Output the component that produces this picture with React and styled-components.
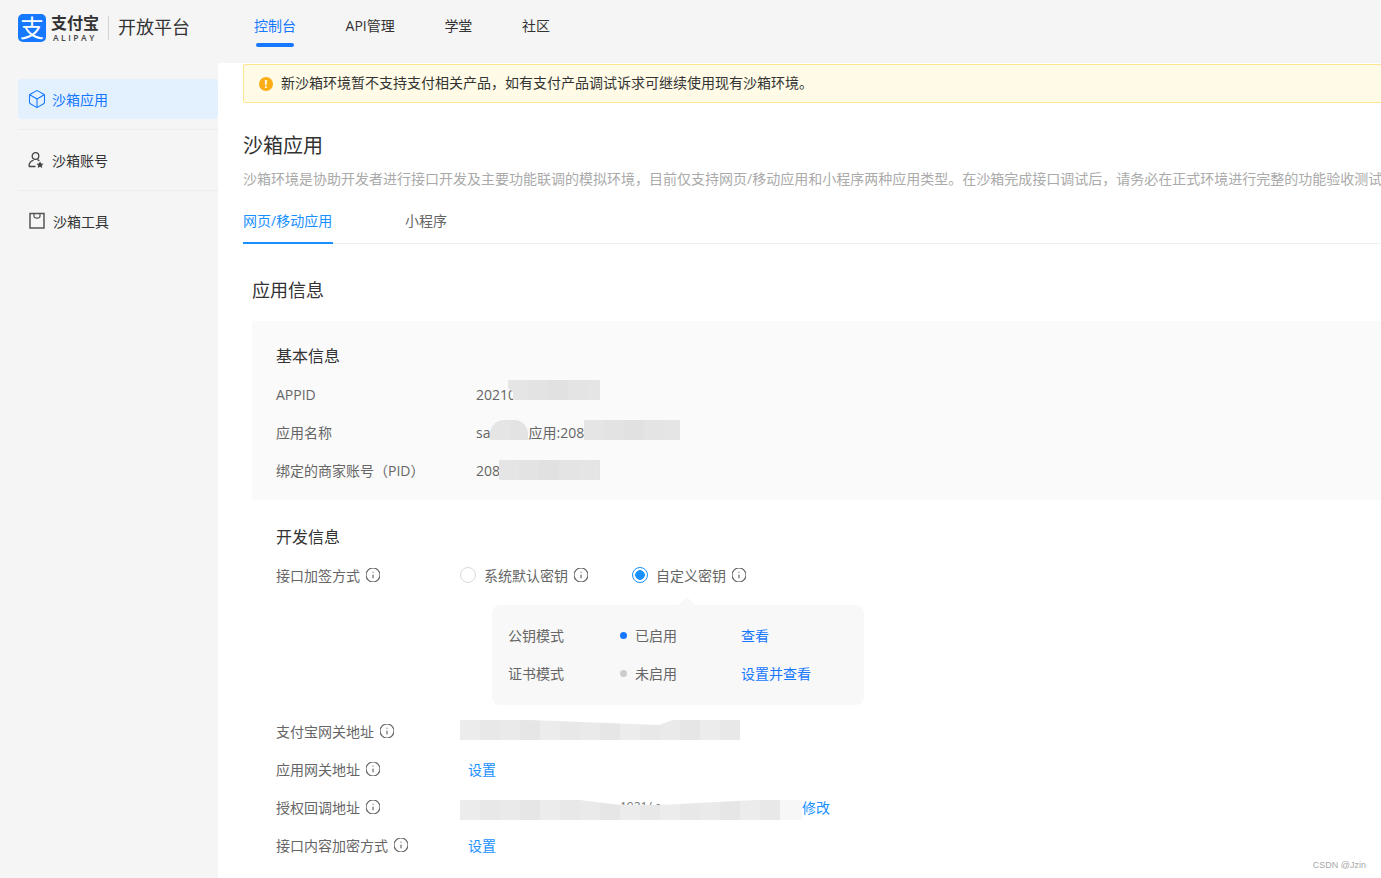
import React from 'react';
import styled, { createGlobalStyle } from 'styled-components';
import { Box, Info } from 'lucide-react';

const GlobalStyle = createGlobalStyle`
  html, body {
    margin: 0;
    padding: 0;
    height: 100%;
    overflow: hidden;
    background: #f5f5f5;
    font-family: "Open Sans", "Noto Sans CJK SC", sans-serif;
    font-size: 14px;
    color: #666;
  }
  * { box-sizing: border-box; }
`;

const Page = styled.div`
  position: relative;
  width: 1381px;
  height: 878px;
  overflow: hidden;
`;

const Header = styled.header`
  display: flex;
  align-items: flex-start;
  height: 63px;
  padding-left: 18px;
`;

const Logo = styled.div`
  display: flex;
  align-items: center;
  width: 236px;
  height: 56px;
`;

const LogoMark = styled.div`
  display: flex;
  align-items: center;
  justify-content: center;
  width: 28px;
  height: 28px;
  border-radius: 5px;
  background: #1677ff;
  color: #fff;
  font-size: 24px;
  line-height: 28px;
`;

const LogoWord = styled.div`
  display: flex;
  flex-direction: column;
  align-items: flex-start;
  width: 48px;
  margin-left: 5px;
`;

const LogoName = styled.span`
  font-size: 16px;
  font-weight: 700;
  line-height: 18px;
  color: #333;
`;

const LogoLatin = styled.span`
  margin: 1px 0 0 2px;
  font-size: 8.500px;
  font-weight: 600;
  line-height: 10px;
  letter-spacing: 2.500px;
  white-space: nowrap;
  color: #444;
`;

const LogoDivider = styled.span`
  width: 1px;
  height: 24px;
  margin: 0 9px;
  background: #d4d4d4;
`;

const LogoTitle = styled.span`
  padding-bottom: 4px;
  font-size: 18px;
  color: #333;
`;

const Nav = styled.nav`
  display: flex;
  gap: 49.6px;
`;

const NavItem = styled.a`
  position: relative;
  display: block;
  height: 47px;
  padding-top: 16px;
  line-height: 20px;
  color: ${p => (p.$active ? '#1677ff' : '#333')};

  ${p =>
    p.$active &&
    `&::after {
      content: '';
      position: absolute;
      left: 2px;
      right: 2px;
      bottom: 0;
      height: 4px;
      border-radius: 2px;
      background: #1677ff;
    }`}
`;

const Body = styled.div`
  display: flex;
  height: 815px;
`;

const Sidebar = styled.aside`
  width: 218px;
  padding: 16px 0 0 18px;
`;

const SideItem = styled.a`
  display: flex;
  align-items: center;
  height: 40px;
  padding-left: ${p => p.$inset || 9}px;
  border-radius: 4px;
  color: ${p => (p.$active ? '#1677ff' : '#333')};
  background: ${p => (p.$active ? '#e3f1fe' : 'transparent')};
`;

const IconSlot = styled.span`
  display: flex;
  align-items: center;
  width: 25px;
`;

const SideDivider = styled.div`
  height: 1px;
  margin: 10px 0;
  background: #ececec;
`;

const Main = styled.main`
  flex: 1;
  min-width: 0;
  padding-left: 25px;
  background: #fff;
  overflow: hidden;
`;

const Notice = styled.div`
  display: flex;
  align-items: center;
  gap: 8px;
  width: 1300px;
  height: 39px;
  margin-top: 1px;
  padding-left: 15px;
  background: #fffbe6;
  border: 1px solid #ffe58f;
  border-radius: 2px;
  color: #333;
`;

const NoticeIcon = styled.span`
  display: flex;
  align-items: center;
  justify-content: center;
  width: 14px;
  height: 14px;
  border-radius: 50%;
  background: #faad14;
  color: #fff;
  font-size: 11px;
  font-weight: 700;
`;

const NoticeText = styled.span`
  padding-bottom: 3px;
`;

const PageTitle = styled.h1`
  margin: 28px 0 0;
  font-size: 20px;
  font-weight: 400;
  line-height: 30px;
  color: #333;
`;

const Description = styled.p`
  margin: 7px 0 0;
  line-height: 22px;
  color: #aaa;
  white-space: nowrap;
`;

const Tabs = styled.div`
  display: flex;
  gap: 72px;
  height: 44px;
  margin-top: 10px;
  border-bottom: 1px solid #eee;
`;

const Tab = styled.a`
  height: 44px;
  min-width: ${p => (p.$active ? 90 : 0)}px;
  padding-top: 11px;
  line-height: 20px;
  color: ${p => (p.$active ? '#1890ff' : '#666')};
  border-bottom: ${p => (p.$active ? '2px solid #1890ff' : 'none')};
`;

const SectionTitle = styled.h2`
  margin: 32px 0 0 9px;
  font-size: 18px;
  font-weight: 400;
  line-height: 28px;
  color: #333;
`;

const Panel = styled.section`
  height: 179px;
  margin: 17px 0 0 9px;
  padding: 23px 0 0 24px;
  background: #fafafa;
`;

const GroupTitle = styled.h3`
  margin: 0 0 8px;
  font-size: 16px;
  font-weight: 400;
  line-height: 24px;
  color: #333;
`;

const Row = styled.div`
  display: grid;
  grid-template-columns: ${p => p.$label || 200}px 1fr;
  align-items: center;
  height: 38px;
  padding-bottom: 2px;
`;

const Label = styled.span`
  display: flex;
  align-items: center;
  gap: 6px;
  color: #666;
`;

const Value = styled.div`
  display: flex;
  align-items: center;
  color: #666;
`;

const tiles = {
  dark: 'repeating-linear-gradient(90deg, #e5e5e5 0 20px, #e3e3e3 20px 40px, #e1e1e1 40px 60px, #e4e4e4 60px 80px)',
  soft: 'repeating-linear-gradient(90deg, #ececec 0 20px, #e8e8e8 20px 40px, #eaeaea 40px 60px, #e6e6e6 60px 80px)',
  pale: '#f7f7f7',
};

// $shift, $overlap: the redaction boxes in the picture are not aligned with their rows
const Mask = styled.span`
  display: block;
  flex: none;
  width: ${p => p.$w}px;
  height: ${p => p.$h || 20}px;
  margin-left: ${p => -(p.$overlap || 0)}px;
  background: ${p => tiles[p.$tone || 'dark']};
  transform: translateY(${p => p.$shift || 0}px);
  ${p => p.$round && 'border-radius: 14px 14px 0 0;'}
  ${p => p.$clip && `clip-path: ${p.$clip};`}
`;

const MaskGap = styled.span`
  display: flex;
  flex: none;
  flex-direction: column;
  width: 40px;
  height: 20px;
  transform: translateY(${p => p.$shift || 0}px);
`;

const GapText = styled.span`
  display: block;
  flex: none;
  height: 5px;
  font-size: 12px;
  line-height: 14px;
  white-space: nowrap;
  overflow: hidden;
  color: #777;
`;

const DevSection = styled.section`
  margin: 25px 0 0 33px;
`;

const RadioGroup = styled.div`
  display: flex;
  align-items: center;
  gap: 44px;
`;

const RadioOption = styled.label`
  display: flex;
  align-items: center;
  gap: 6px;
  color: #666;
`;

const RadioDot = styled.span`
  width: 16px;
  height: 16px;
  margin-right: 2px;
  border-radius: 50%;
  border: 1px solid ${p => (p.$checked ? '#1890ff' : '#d9d9d9')};
  background: ${p => (p.$checked ? 'radial-gradient(circle, #1890ff 0 4.5px, #fff 5px)' : '#fff')};
`;

const Popover = styled.div`
  position: relative;
  width: 372px;
  height: 100px;
  margin: 10px 0 8px 216px;
  padding: 12px 16px;
  border-radius: 8px;
  background: #f8f8f8;

  &::before {
    content: '';
    position: absolute;
    top: -8px;
    left: 186px;
    border-left: 9px solid transparent;
    border-right: 9px solid transparent;
    border-bottom: 9px solid #f8f8f8;
  }
`;

const ModeRow = styled.div`
  display: grid;
  grid-template-columns: 112px 122px 1fr;
  align-items: center;
  height: 38px;
  padding-bottom: 2px;
`;

const Status = styled.span`
  display: flex;
  align-items: center;
  gap: 8px;
  color: #666;

  &::before {
    content: '';
    width: 7px;
    height: 7px;
    border-radius: 50%;
    background: ${p => (p.$on ? '#1677ff' : '#ccc')};
  }
`;

const TextLink = styled.a`
  flex: none;
  color: ${p => p.$color || '#1890ff'};
  margin-left: ${p => p.$offset || 0}px;
`;

const Watermark = styled.span`
  position: absolute;
  right: 15px;
  bottom: 8px;
  font-family: "Liberation Sans", sans-serif;
  font-size: 9px;
  color: #a8a8a8;
`;

const TipIcon = styled(Info)`
  flex: none;
  width: 14px;
  height: 14px;
`;

const Tip = () => (
  <TipIcon viewBox="2 2 20 20" strokeWidth={1.700} color="#666" />
);

const UserStarIcon = () => (
  <svg width="18" height="18" viewBox="0 0 18 18" fill="none" stroke="#444" strokeWidth="1.300">
    <circle cx="8.500" cy="5" r="3.300" />
    <path d="M2 15.500c0-3.400 1.800-5.700 4.600-6.200M10.500 8.600c.8.300 1.300.7 1.800 1.200M2 15.500h6.500" />
    <path d="M13 10.300l1.100 2.200 2.400.3-1.700 1.700.4 2.400-2.200-1.100-2.200 1.100.4-2.400-1.700-1.700 2.400-.3z" fill="#444" stroke="none" />
  </svg>
);

const BagIcon = () => (
  <svg width="18" height="18" viewBox="0 0 18 18" fill="none" stroke="#555" strokeWidth="1.500">
    <path d="M2 1.500h14v14.500H2z" />
    <path d="M6 1.500v2.800c0 2.400 6 2.400 6 0V1.500" strokeWidth="1.200" />
  </svg>
);

const InfoLabel = ({ children }) => (
  <Label>
    {children}
    <Tip />
  </Label>
);

const App = () => (
  <Page>
    <GlobalStyle />
    <Header>
      <Logo>
        <LogoMark>支</LogoMark>
        <LogoWord>
          <LogoName>支付宝</LogoName>
          <LogoLatin>ALIPAY</LogoLatin>
        </LogoWord>
        <LogoDivider />
        <LogoTitle>开放平台</LogoTitle>
      </Logo>
      <Nav>
        <NavItem $active>控制台</NavItem>
        <NavItem>API管理</NavItem>
        <NavItem>学堂</NavItem>
        <NavItem>社区</NavItem>
      </Nav>
    </Header>
    <Body>
      <Sidebar>
        <SideItem $active>
          <IconSlot>
            <Box size={20} strokeWidth={1.300} />
          </IconSlot>
          沙箱应用
        </SideItem>
        <SideDivider />
        <SideItem>
          <IconSlot>
            <UserStarIcon />
          </IconSlot>
          沙箱账号
        </SideItem>
        <SideDivider />
        <SideItem $inset={10}>
          <IconSlot>
            <BagIcon />
          </IconSlot>
          沙箱工具
        </SideItem>
      </Sidebar>
      <Main>
        <Notice>
          <NoticeIcon>!</NoticeIcon>
          <NoticeText>新沙箱环境暂不支持支付相关产品，如有支付产品调试诉求可继续使用现有沙箱环境。</NoticeText>
        </Notice>
        <PageTitle>沙箱应用</PageTitle>
        <Description>
          沙箱环境是协助开发者进行接口开发及主要功能联调的模拟环境，目前仅支持网页/移动应用和小程序两种应用类型。在沙箱完成接口调试后，请务必在正式环境进行完整的功能验收测试。
        </Description>
        <Tabs>
          <Tab $active>网页/移动应用</Tab>
          <Tab>小程序</Tab>
        </Tabs>
        <SectionTitle>应用信息</SectionTitle>
        <Panel>
          <GroupTitle>基本信息</GroupTitle>
          <Row>
            <Label>APPID</Label>
            <Value>
              20210
              <Mask $w={92} $overlap={8} $shift={-4} $clip="polygon(0 0, 100% 0, 100% 100%, 5px 100%, 5px 60%, 0 40%)" />
            </Value>
          </Row>
          <Row>
            <Label>应用名称</Label>
            <Value>
              sa
              <Mask $w={38} $round $shift={-2} />
              应用:2088
              <Mask $w={96} $overlap={8} $shift={-2} />
            </Value>
          </Row>
          <Row>
            <Label>绑定的商家账号（PID）</Label>
            <Value>
              2088
              <Mask $w={101} $overlap={9} />
            </Value>
          </Row>
        </Panel>
        <DevSection>
          <GroupTitle>开发信息</GroupTitle>
          <Row $label={184}>
            <InfoLabel>接口加签方式</InfoLabel>
            <RadioGroup>
              <RadioOption>
                <RadioDot />
                系统默认密钥
                <Tip />
              </RadioOption>
              <RadioOption>
                <RadioDot $checked />
                自定义密钥
                <Tip />
              </RadioOption>
            </RadioGroup>
          </Row>
          <Popover>
            <ModeRow>
              公钥模式
              <Status $on>已启用</Status>
              <TextLink $color="#1677ff" $offset={-1}>查看</TextLink>
            </ModeRow>
            <ModeRow>
              证书模式
              <Status>未启用</Status>
              <TextLink $color="#1677ff" $offset={-1}>设置并查看</TextLink>
            </ModeRow>
          </Popover>
          <Row $label={184}>
            <InfoLabel>支付宝网关地址</InfoLabel>
            <Value>
              <Mask
                $w={280}
                $tone="soft"
                $shift={-1}
                $clip="polygon(0 0, 25% 0, 71% 25%, 76% 0, 100% 0, 100% 100%, 0 100%)"
              />
            </Value>
          </Row>
          <Row $label={184}>
            <InfoLabel>应用网关地址</InfoLabel>
            <Value>
              <TextLink $offset={8}>设置</TextLink>
            </Value>
          </Row>
          <Row $label={184}>
            <InfoLabel>授权回调地址</InfoLabel>
            <Value>
              <Mask $w={160} $tone="soft" $shift={3} $clip="polygon(0 0, 75% 0, 100% 25%, 100% 100%, 0 100%)" />
              <MaskGap $shift={3}>
                <GapText>1921/ a</GapText>
                <Mask $w={40} $h={15} $tone="soft" />
              </MaskGap>
              <Mask $w={120} $tone="soft" $shift={3} $clip="polygon(0 25%, 80% 0, 100% 0, 100% 100%, 0 100%)" />
              <Mask $w={22} $tone="pale" $shift={3} />
              <TextLink>修改</TextLink>
            </Value>
          </Row>
          <Row $label={184}>
            <InfoLabel>接口内容加密方式</InfoLabel>
            <Value>
              <TextLink $offset={8}>设置</TextLink>
            </Value>
          </Row>
        </DevSection>
      </Main>
    </Body>
    <Watermark>CSDN @Jzin</Watermark>
  </Page>
);

export default App;
